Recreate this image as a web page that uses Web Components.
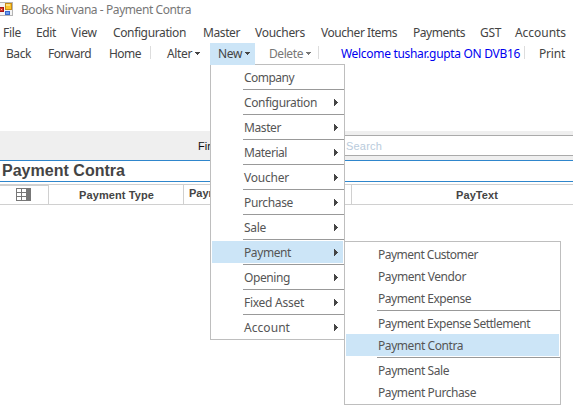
<!DOCTYPE html>
<html lang="en"><head><meta charset="utf-8"><title>Books Nirvana</title>
<style>html,body{margin:0;width:573px;height:406px;overflow:hidden;background:#fff}body{font:12px/16px "Noto Sans","Open Sans",sans-serif;color:#444}</style></head>
<body><books-app></books-app>
<script>
// Inline label whose tracking is adjusted to occupy a given advance width.
class FitText extends HTMLElement{
  connectedCallback(){
    if(this.shadowRoot)return;
    const r=this.attachShadow({mode:'open'});
    r.innerHTML='<style>:host{display:block;flex:none;white-space:nowrap}span{display:inline-block}</style><span></span>';
    const s=r.querySelector('span');s.textContent=this.getAttribute('text');
    const w=+this.getAttribute('w');this.style.width=w+'px';
    const n=s.textContent.length,m=s.getBoundingClientRect().width;
    if(m)s.style.letterSpacing=((w-m)/n)+'px';
  }
}
class AppIcon extends HTMLElement{
  constructor(){super();this.attachShadow({mode:'open'}).innerHTML=`<style>:host{display:block;width:13px;height:14px;flex:none}svg{display:block}</style>
<svg width="13" height="14" shape-rendering="crispEdges"><path d="M0 0h13v14H0z" fill="#b4b4b4"/><path d="M0 1h12v12H0z" fill="#f4f4f4"/><path d="M0 5h4v5H0z" fill="#a51414"/><path d="M0 6h3v3H0z" fill="#d83a2c"/><path d="M1 7h1v1H1z" fill="#ffc0a8"/><path d="M5 1h7v7H5z" fill="#c98d16"/><path d="M6 2h5v5H6z" fill="#fbc52c"/><path d="M6 2h4v2H6z" fill="#ffe17d"/><path d="M5 9h5v4H5z" fill="#3467cc"/><path d="M6 10h3v2H6z" fill="#6b9bf0"/></svg>`}
}
class MenuBar extends HTMLElement{
  connectedCallback(){
    if(this.shadowRoot)return;
    const d=[['File',18],['Edit',20],['View',26],['Configuration',73],['Master',37],['Vouchers',50],['Voucher Items',76],['Payments',52],['GST',21],['Accounts',51]];
    const gaps=[3,15,15,16,17,15,16,16,15,14];
    this.attachShadow({mode:'open'}).innerHTML=`<style>:host{display:flex;height:22px;line-height:23px}</style>`+d.map(([t,w],i)=>`<fit-text style="margin-left:${gaps[i]}px" text="${t}" w="${w}"></fit-text>`).join('');
  }
}
class ToolItem extends HTMLElement{
  connectedCallback(){
    if(this.shadowRoot)return;
    const a=this.hasAttribute('arrow');
    this.attachShadow({mode:'open'}).innerHTML=`<style>:host{display:flex;flex:none;box-sizing:border-box;height:21px;line-height:21px;align-items:center}:host([active]){background:#cce5f7}:host([disabled]){color:#777}svg{margin-left:3px}</style><fit-text text="${this.getAttribute('text')}" w="${this.getAttribute('w')}"></fit-text>${a?'<svg width="5" height="3" shape-rendering="crispEdges"><path d="M0 0h5v1H0zM1 1h3v1H1zM2 2h1v1H2z" fill="currentColor"/></svg>':''}`;
  }
}
class ToolBar extends HTMLElement{
  constructor(){super();this.attachShadow({mode:'open'}).innerHTML=`<style>:host{display:flex;height:21px}i{width:1px;height:13px;background:#ddd;margin-top:3px;flex:none}</style>
<tool-item style="padding-left:6px" text="Back" w="25"></tool-item><tool-item style="padding-left:17px" text="Forward" w="43"></tool-item><tool-item style="padding-left:18px" text="Home" w="32"></tool-item><i style="margin-left:9px"></i>
<tool-item style="padding-left:16px" text="Alter" w="25" arrow></tool-item><tool-item active style="margin-left:10px;padding-left:8px;width:45px" text="New" w="24" arrow></tool-item><tool-item disabled style="padding-left:14px" text="Delete" w="34" arrow></tool-item><i style="margin-left:7px"></i><tool-item style="padding-left:22px;color:#0000f0" text="Welcome tushar.gupta ON DVB16" w="179"></tool-item><i style="margin-left:4px"></i><tool-item style="padding-left:14px" text="Print" w="26"></tool-item>`}
}
class FilterBar extends HTMLElement{
  constructor(){super();this.attachShadow({mode:'open'}).innerHTML=`<style>:host{display:flex;height:29px;background:#efefef;font:11px/22px "Liberation Sans",sans-serif;color:#111;align-items:flex-start}
label{width:146px;margin:4px 0 0 198px;flex:none}div{flex:1;box-sizing:border-box;height:21px;margin-top:4px;border:solid #aaa;border-width:1px 0;background:#fff;padding-left:2px;line-height:21px;color:#b9cbdc}</style><label>Find</label><div><fit-text text="Search" w="36"></fit-text></div>`}
}
class PageHeading extends HTMLElement{
  constructor(){super();this.attachShadow({mode:'open'}).innerHTML=`<style>:host{display:block;box-sizing:border-box;height:22px;border:solid #2f86cc;border-width:1px 0;padding-left:2px;font:bold 16px/20px "Liberation Sans",sans-serif;color:#444}</style><fit-text text="Payment Contra" w="123"></fit-text>`}
}
class GridHeader extends HTMLElement{
  constructor(){super();this.attachShadow({mode:'open'}).innerHTML=`<style>:host{display:grid;grid-template-columns:49px 135px 168px 1fr;box-sizing:border-box;height:21px;margin-top:2px;border:solid #d0d0d0;border-width:1px 0;font:bold 11px/21px "Liberation Sans",sans-serif;color:#444}div{border-right:1px solid #d0d0d0;display:flex;height:19px}.pick{border-top:1px solid #d0d0d0;box-sizing:border-box;padding:2px 0 0 16px}.type{padding-left:30px}.name{padding-left:5px;line-height:17px}.text{border:0;padding-left:104px}</style>
<div class="pick"><svg width="15" height="13" shape-rendering="crispEdges"><path d="M0 0h15v13H0z" fill="#777"/><path d="M1 1h4v3H1zM6 1h4v3H6zM1 5h4v3H1zM6 5h4v3H6zM1 9h4v3H1zM6 9h4v3H6z" fill="#fff"/></svg></div><div class="type"><fit-text text="Payment Type" w="75"></fit-text></div><div class="name">Paym</div><div class="text"><fit-text text="PayText" w="42"></fit-text></div>`}
}
class DropMenu extends HTMLElement{
  connectedCallback(){
    if(this.shadowRoot)return;
    const rows=JSON.parse(this.getAttribute('items'));
    this.attachShadow({mode:'open'}).innerHTML=`<style>:host{display:block;position:absolute;box-sizing:border-box;border:1px solid #bebebe;background:#fff;padding:1px 0;color:#555}
.row{display:flex;box-sizing:border-box;height:22px;margin:0 1px;padding:0 8px 0 32px;align-items:center;justify-content:space-between;line-height:20px}fit-text{padding-top:2px}.on{background:#cce5f7}hr{border:0;height:1px;margin:1px 0 1px 32px;background:#999}</style>`+rows.map(r=>r==='-'?'<hr>':`<div class="row${r[2]&1?' on':''}"><fit-text text="${r[0]}" w="${r[1]}"></fit-text>${r[2]&2?'<svg width="4" height="7" style="margin-right:-3px" shape-rendering="crispEdges"><path d="M0 0h1v1h1v1h1v1h1v1h-1v1h-1v1h-1v1h-1z" fill="#444"/></svg>':''}</div>`).join('');
  }
}
class BooksApp extends HTMLElement{
  constructor(){super();this.attachShadow({mode:'open'}).innerHTML=`<style>:host{display:block;position:relative;width:573px;height:406px;overflow:hidden;background:#fff}header{display:flex;height:21px;color:#777;line-height:20px}app-icon{margin-top:2px}header fit-text{margin-left:8px}filter-bar{margin-top:67px}
.new{left:210px;top:64px;width:135px;height:276px}.payment{left:344px;top:241px;width:217px;height:164px}.join{position:absolute;left:210px;top:64px;width:45px;height:1px;background:#cce5f7}</style>
<header><app-icon></app-icon><fit-text text="Books Nirvana - Payment Contra" w="170"></fit-text></header><menu-bar></menu-bar><tool-bar></tool-bar><filter-bar></filter-bar><page-heading></page-heading><grid-header></grid-header>
<drop-menu class="new" items='[["Company",50,0],"-",["Configuration",73,2],"-",["Master",37,2],"-",["Material",43,2],"-",["Voucher",45,2],"-",["Purchase",49,2],"-",["Sale",22,2],"-",["Payment",47,3],"-",["Opening",46,2],"-",["Fixed Asset",60,2],"-",["Account",46,2]]'></drop-menu><div class="join"></div>
<drop-menu class="payment" items='[["Payment Customer",100,0],["Payment Vendor",88,0],["Payment Expense",93,0],"-",["Payment Expense Settlement",152,0],["Payment Contra",85,1],"-",["Payment Sale",71,0],["Payment Purchase",98,0]]'></drop-menu>`}
}
for(const [n,c] of [['fit-text',FitText],['app-icon',AppIcon],['menu-bar',MenuBar],['tool-item',ToolItem],['tool-bar',ToolBar],['filter-bar',FilterBar],['page-heading',PageHeading],['grid-header',GridHeader],['drop-menu',DropMenu],['books-app',BooksApp]])customElements.define(n,c);
</script></body></html>
